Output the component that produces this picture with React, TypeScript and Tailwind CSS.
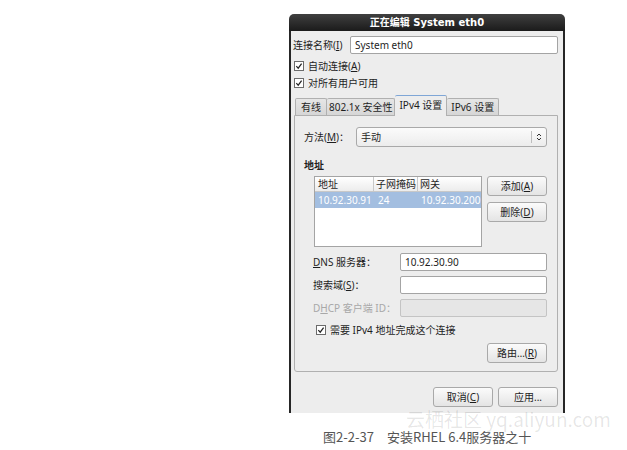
import React from "react";

const Check = () => (
  <svg width="10" height="10" viewBox="0 0 10 10" className="shrink-0">
    <rect x="0.5" y="0.5" width="9" height="9" fill="#fff" stroke="#6b6b6b" />
    <path d="M2.3 5.2 L4.2 7.2 L7.6 2.6" fill="none" stroke="#222" strokeWidth="1.2" />
  </svg>
);

const Btn = ({ children, className = "" }: { children: React.ReactNode; className?: string }) => (
  <div
    className={`flex h-[20px] w-[60px] items-center justify-center rounded-[3px] border border-[#a9a9a9] bg-linear-to-b from-[#fbfbfb] to-[#e4e4e4] text-[#1e1e1e] ${className}`}
  >
    {children}
  </div>
);

const Field = ({ value = "", disabled = false, className = "" }: { value?: string; disabled?: boolean; className?: string }) => (
  <div
    className={`flex h-[18px] items-center rounded-[2px] border px-[4px] ${
      disabled ? "border-[#c4c4c4] bg-[#e6e6e6]" : "border-[#a4a4a4] bg-white"
    } ${className}`}
  >
    {value}
  </div>
);

export default function App() {
  return (
    <div className="relative h-[450px] w-[627px] overflow-hidden bg-white">
      <div className="ml-[289px] mt-[14px] flex w-[276px] flex-col font-['Noto_Sans','Noto_Sans_CJK_SC',sans-serif] text-[10px] leading-[14px] text-[#1e1e1e]">
        {/* title bar */}
        <div className="flex h-[17px] items-center justify-center rounded-t-[5px] bg-linear-to-b from-[#404040] to-[#1b1b1b] font-['DejaVu_Sans','Noto_Sans_CJK_SC',sans-serif] text-[10px] font-bold text-white">
          正在编辑 System eth0
        </div>

        <div className="flex h-[382px] flex-col border-x-2 border-[#262626] bg-[#ededed] pl-[2px] pr-[5px] pt-[5px]">
          <div className="flex h-[18px] items-center">
            <span>
              连接名称(<u>I</u>)
            </span>
            <Field value="System eth0" className="ml-auto w-[208px]" />
          </div>

          <div className="mt-[4px] flex h-[16px] items-center gap-[4px] pl-[1px]">
            <Check />
            <span>
              自动连接(<u>A</u>)
            </span>
          </div>
          <div className="flex h-[17px] items-center gap-[4px] pl-[1px]">
            <Check />
            <span>对所有用户可用</span>
          </div>

          {/* tabs */}
          <div className="mt-[4px] flex h-[20px] items-end pl-[2px]">
            <div className="flex h-[17px] items-center rounded-t-[2px] border border-b-0 border-[#b0b0b0] bg-linear-to-b from-[#e6e6e6] to-[#d6d6d6] px-[5px]">
              有线
            </div>
            <div className="flex h-[17px] items-center rounded-t-[2px] border border-b-0 border-l-0 border-[#b0b0b0] bg-linear-to-b from-[#e6e6e6] to-[#d6d6d6] px-[2px]">
              802.1x 安全性
            </div>
            <div className="relative z-10 -mb-[1px] flex h-[21px] items-center rounded-t-[2px] border border-b-0 border-l-0 border-[#b0b0b0] border-t-[#7fa6d6] bg-[#ededed] px-[4px] pb-[2px]">
              IPv4 设置
            </div>
            <div className="flex h-[17px] items-center rounded-t-[2px] border border-b-0 border-l-0 border-[#b0b0b0] bg-linear-to-b from-[#e6e6e6] to-[#d6d6d6] px-[4px]">
              IPv6 设置
            </div>
          </div>

          {/* panel */}
          <div className="ml-[1px] flex h-[257px] flex-col rounded-b-[3px] border border-[#b0b0b0] pl-[9px] pr-[10px] pt-[11px]">
            <div className="flex h-[20px] items-center">
              <span>
                方法(<u>M</u>)：
              </span>
              <div className="ml-auto flex h-[20px] w-[191px] items-center rounded-[3px] border border-[#a9a9a9] bg-linear-to-b from-[#fbfbfb] to-[#ececec]">
                <span className="flex-1 pl-[4px]">手动</span>
                <div className="h-[12px] w-px bg-[#bdbdbd]" />
                <svg width="12" height="12" viewBox="0 0 12 12" className="mx-[1px]">
                  <path d="M4 5 L6 3 L8 5 M4 7 L6 9 L8 7" fill="none" stroke="#333" strokeWidth="1" />
                </svg>
              </div>
            </div>

            <div className="mt-[12px] h-[12px] font-bold leading-[12px]">地址</div>

            <div className="mt-[5px] flex gap-[5px] pl-[10px]">
              <div className="flex h-[71px] w-[171px] flex-col border border-[#a4a4a4] bg-white">
                <div className="flex h-[15px] items-center border-b border-[#c8c8c8] bg-linear-to-b from-white to-[#ececec]">
                  <span className="w-[59px] border-r border-[#c8c8c8] pl-[3px]">地址</span>
                  <span className="w-[44px] border-r border-[#c8c8c8] pl-[2px]">子网掩码</span>
                  <span className="pl-[2px]">网关</span>
                </div>
                <div className="flex h-[16px] items-center bg-[#a3bee0] text-white">
                  <span className="w-[59px] whitespace-nowrap pl-[3px]">10.92.30.91</span>
                  <span className="w-[44px] pl-[4px]">24</span>
                  <span className="whitespace-nowrap pl-[3px]">10.92.30.200</span>
                </div>
              </div>
              <div className="flex flex-col gap-[6px]">
                <Btn className="h-[19px]">
                  添加(<u>A</u>)
                </Btn>
                <Btn className="h-[19px]">
                  删除(<u>D</u>)
                </Btn>
              </div>
            </div>

            <div className="mt-[6px] flex flex-col gap-[5px] pl-[9px]">
              <div className="flex items-center">
                <span>
                  <u>D</u>NS 服务器：
                </span>
                <Field value="10.92.30.90" className="ml-auto w-[147px]" />
              </div>
              <div className="flex items-center">
                <span>
                  搜索域(<u>S</u>)：
                </span>
                <Field className="ml-auto w-[147px]" />
              </div>
              <div className="flex items-center">
                <span className="text-[#a8a8a8]">
                  D<u>H</u>CP 客户端 ID：
                </span>
                <Field disabled className="ml-auto w-[147px]" />
              </div>
            </div>

            <div className="mt-[5px] flex h-[16px] items-center gap-[4px] pl-[12px]">
              <Check />
              <span>需要 IPv4 地址完成这个连接</span>
            </div>

            <div className="mt-[5px] flex justify-end">
              <Btn className="h-[19px]">
                路由…(<u>R</u>)
              </Btn>
            </div>
          </div>

          <div className="mt-[15px] flex justify-end gap-[5px]">
            <Btn>
              取消(<u>C</u>)
            </Btn>
            <Btn>应用...</Btn>
          </div>
        </div>
      </div>

      <div className="ml-[323px] mt-[15px] font-['Noto_Sans_CJK_SC',sans-serif] text-[13px] leading-[18px] text-[#555]">
        图2-2-37　安装RHEL 6.4服务器之十
      </div>

      <div className="absolute left-[406px] top-[408px] font-['Noto_Sans_CJK_SC',sans-serif] text-[19px] leading-[22px] text-[#000]/10">
        云栖社区 yq.aliyun.com
      </div>
    </div>
  );
}
